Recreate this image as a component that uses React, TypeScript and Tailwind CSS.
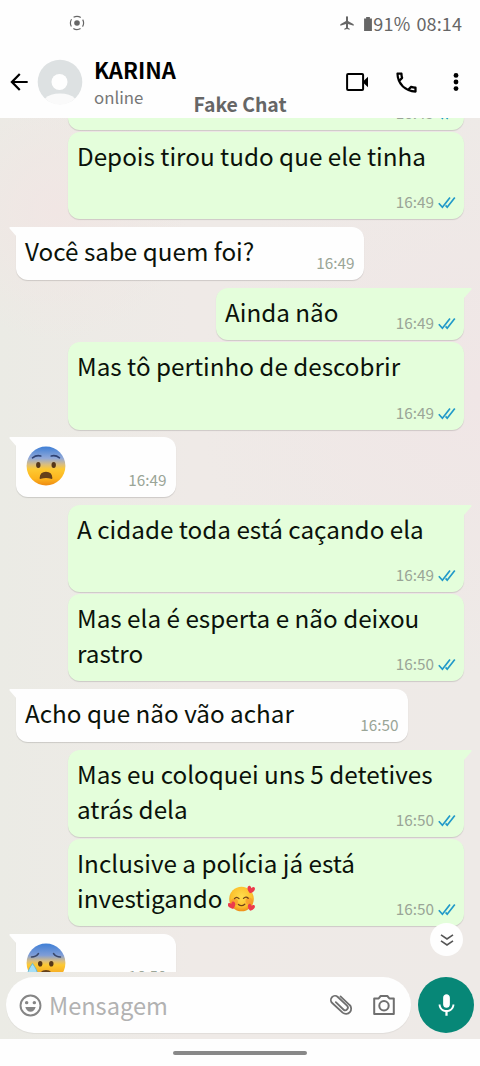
import React from 'react'
import { clsx } from 'clsx'
import { MdAirplanemodeActive, MdArrowBack, MdMic, MdOutlineCall } from 'react-icons/md'

type Message = {
  id: number
  text?: string
  emoji?: React.ReactNode
  time: string
  mine?: boolean
  tail?: boolean
  size: string
}

const FearfulFace = () => (
  <svg viewBox="0 0 40 40" className="h-10 w-10">
    <defs>
      <linearGradient id="fearful" x1="0" y1="0" x2="0" y2="1">
        <stop offset="0" stopColor="#3f7fd6" />
        <stop offset="0.3" stopColor="#92a9d8" />
        <stop offset="0.46" stopColor="#d9bd80" />
        <stop offset="0.58" stopColor="#fdc932" />
        <stop offset="0.82" stopColor="#fdb51e" />
        <stop offset="1" stopColor="#ee8b12" />
      </linearGradient>
    </defs>
    <circle cx="20" cy="20" r="19.4" fill="url(#fearful)" />
    <path d="M6.5 11.8Q10.5 8.6 14.8 10M33.5 11.8Q29.5 8.6 25.2 10" stroke="#2f4272" strokeWidth="1.6" fill="none" strokeLinecap="round" />
    <ellipse cx="12.3" cy="19" rx="2.2" ry="2.9" fill="#553719" />
    <ellipse cx="27.7" cy="19" rx="2.2" ry="2.9" fill="#553719" />
    <path d="M13.6 32Q14 25.8 20 25.8T26.4 32Q26.4 33.2 25 32.8Q20 31 15 32.8Q13.5 33.2 13.6 32Z" fill="#65401a" />
  </svg>
)

const AnxiousFace = () => (
  <svg viewBox="0 0 40 40" className="h-10 w-10">
    <defs>
      <linearGradient id="anxious" x1="0" y1="0" x2="0" y2="1">
        <stop offset="0" stopColor="#3f7fd6" />
        <stop offset="0.3" stopColor="#7f9dd7" />
        <stop offset="0.45" stopColor="#d9bd80" />
        <stop offset="0.55" stopColor="#fdc932" />
        <stop offset="1" stopColor="#ee8b12" />
      </linearGradient>
    </defs>
    <circle cx="20" cy="20" r="19.4" fill="url(#anxious)" />
    <path d="M5.5 14Q10 14 12.5 10.5M34.5 14Q30 14 27.5 10.5" stroke="#394668" strokeWidth="1.5" fill="none" strokeLinecap="round" />
    <ellipse cx="14.2" cy="20.8" rx="2.2" ry="2.8" fill="#553719" />
    <ellipse cx="25.3" cy="20.8" rx="2.2" ry="2.8" fill="#553719" />
    <path d="M14 31Q15 27 20 27T26 31Z" fill="#65401a" />
    <path d="M6.5 20.5Q1.8 27 1.8 31A4.8 4.8 0 0 0 11.4 31Q11.4 27 6.5 20.5Z" fill="#a5def6" stroke="#51b4dc" strokeWidth="0.8" />
  </svg>
)

const heart = 'M0 3.5C-6 0-4-4.8-1.7-3.8Q-.4-3.3 0-2Q.4-3.3 1.7-3.8C4-4.8 6 0 0 3.5Z'

const LoveFace = () => (
  <svg viewBox="0 0 28 28" className="inline-block h-7 w-7 align-[-5px]">
    <defs>
      <radialGradient id="love" cx="0.5" cy="0.4" r="0.6">
        <stop offset="0" stopColor="#ffdd4d" />
        <stop offset="0.7" stopColor="#fcc12e" />
        <stop offset="1" stopColor="#ee8c18" />
      </radialGradient>
    </defs>
    <circle cx="13.5" cy="14" r="12.3" fill="url(#love)" />
    <circle cx="6.5" cy="17" r="3.5" fill="#f58e2c" opacity="0.6" />
    <circle cx="21" cy="16" r="3.5" fill="#f58e2c" opacity="0.6" />
    <path d="M6.5 13.6Q8.5 11 11 13.6M15.5 13.4Q18 10.8 20.2 13.2M10.4 19.4Q13.5 22 16.8 19.2" stroke="#70421a" strokeWidth="1.3" fill="none" strokeLinecap="round" />
    <path d={heart} transform="translate(22.8 5) rotate(15) scale(.95)" fill="#ec3b4c" />
    <path d={heart} transform="translate(4 20.8) rotate(-20) scale(.95)" fill="#ec3b4c" />
    <path d={heart} transform="translate(23 22.8) rotate(15) scale(.9)" fill="#ec3b4c" />
  </svg>
)

const messages: Message[] = [
  { id: 1, time: '16:49', mine: true, size: '-mt-[75px] h-[87px] w-[396px]' },
  { id: 2, text: 'Depois tirou tudo que ele tinha', time: '16:49', mine: true, size: 'mt-0.5 h-[87px] w-[396px]' },
  { id: 3, text: 'Você sabe quem foi?', time: '16:49', tail: true, size: 'mt-2 h-[53px] w-[348px]' },
  { id: 4, text: 'Ainda não', time: '16:49', mine: true, tail: true, size: 'mt-2 h-[52px] w-[248px]' },
  { id: 5, text: 'Mas tô pertinho de descobrir', time: '16:49', mine: true, size: 'mt-0.5 h-[88px] w-[396px]' },
  { id: 6, emoji: <FearfulFace />, time: '16:49', tail: true, size: 'mt-[7px] h-[60px] w-[160px]' },
  { id: 7, text: 'A cidade toda está caçando ela', time: '16:49', mine: true, tail: true, size: 'mt-2 h-[87px] w-[396px]' },
  { id: 8, text: 'Mas ela é esperta e não deixou rastro', time: '16:50', mine: true, size: 'mt-0.5 h-[87px] w-[396px]' },
  { id: 9, text: 'Acho que não vão achar', time: '16:50', tail: true, size: 'mt-2 h-[53px] w-[392px]' },
  { id: 10, text: 'Mas eu coloquei uns 5 detetives atrás dela', time: '16:50', mine: true, tail: true, size: 'mt-2 h-[87px] w-[396px]' },
  {
    id: 11,
    text: 'Inclusive a polícia já está investigando ',
    emoji: <LoveFace />,
    time: '16:50',
    mine: true,
    size: 'mt-0.5 h-[87px] w-[396px]',
  },
  { id: 12, emoji: <AnxiousFace />, time: '16:50', tail: true, size: 'mt-2 h-[59px] w-[160px]' },
]

const Ticks = () => (
  <svg viewBox="0 0 18 13" className="mt-0.5 h-[13px] w-[18px]" fill="none" stroke="#2199c9" strokeWidth="1.7">
    <path d="M.8 7.2L4.4 11.2L12 1.4M7.6 9.4L9.2 11.2L16.8 1.4" />
  </svg>
)

const Bubble = ({ message }: { message: Message }) => {
  const { text, emoji, time, mine, tail, size } = message
  return (
    <div
      className={clsx(
        'relative shrink-0 rounded-xl shadow-[0_1px_1px_rgba(0,0,0,0.14)]',
        size,
        mine ? 'mr-4 self-end bg-[#e4fedb]' : 'ml-4 self-start bg-[#fefefe]',
        tail && (mine ? 'rounded-tr-none' : 'rounded-tl-none')
      )}
    >
      {tail && (
        <svg
          viewBox="0 0 8 10"
          className={clsx('absolute top-0 h-2.5 w-2', mine ? '-right-[7.5px] text-[#e4fedb]' : '-left-[7.5px] -scale-x-100 text-[#fefefe]')}
        >
          <path d="M0 0H6.5Q8.5 0 7 2L0 10Z" fill="currentColor" />
        </svg>
      )}
      {text ? (
        <p className="pt-[7.2px] pr-6 pl-[9px] text-[24.25px] leading-[34.8px] text-[#0b120a]">
          {text}
          {emoji}
        </p>
      ) : (
        <div className="pt-[9px] pl-[9.5px]">{emoji}</div>
      )}
      <div className={clsx('absolute bottom-2 flex items-center gap-1 text-[15.3px] leading-5 text-[#9aa597]', mine ? 'right-2' : 'right-[9.5px]')}>
        <span>{time}</span>
        {mine && <Ticks />}
      </div>
    </div>
  )
}

const StatusBar = () => (
  <div className="flex h-12 items-center justify-between pr-[18px] pl-[69px] text-[#666]">
    <svg viewBox="0 0 16 16" className="-mt-0.5 h-4 w-4" fill="none" stroke="currentColor" strokeWidth="1.2">
      <circle cx="8" cy="8" r="6.6" strokeDasharray="7.6 2.77" strokeDashoffset="3.8" />
      <circle cx="8" cy="8" r="2.8" fill="currentColor" stroke="none" />
    </svg>
    <div className="-mt-[3px] flex items-center text-[18px] leading-6">
      <MdAirplanemodeActive className="mr-2 h-4 w-4" />
      <svg viewBox="0 0 10 15" className="mt-0.5 h-[14px] w-[10px]" fill="currentColor">
        <path d="M3 0H7V1.5H9.2V15H.8V1.5H3Z" />
      </svg>
      <span className="mr-1.5 tracking-[0.2px]">91%</span>
      <span className="tracking-[0.1px]">08:14</span>
    </div>
  </div>
)

const Header = () => (
  <header className="relative z-10 h-[118px] shrink-0 bg-[#fefefe]">
    <StatusBar />
    <div className="flex h-[68px] items-center pl-1.5">
      <MdArrowBack className="h-[26px] w-[26px] text-black" />
      <svg viewBox="0 0 46 46" className="ml-[5px] h-[46px] w-[46px]">
        <circle cx="23" cy="23" r="22.3" fill="#dde1e2" />
        <circle cx="22.5" cy="23" r="8" fill="#fefefe" />
        <path d="M8 39.5Q13 34.5 23 34.5T38 39.5Q32 45.5 23 45.5T8 39.5Z" fill="#fafafa" />
      </svg>
      <div className="ml-[11px] flex w-[100px] flex-col pt-0.5">
        <span className="text-[22px] leading-[27px] font-bold text-black">KARINA</span>
        <span className="text-[16.8px] leading-[28px] text-[#777]">online</span>
      </div>
      <div className="ml-auto flex items-center pr-3">
        <svg viewBox="0 0 24 20" className="mr-6 h-5 w-6 text-black">
          <rect x="2.1" y="2.1" width="16" height="15.8" rx="1" fill="none" stroke="currentColor" strokeWidth="2" />
          <path d="M18.5 9L23 4.8V15.2L18.5 11Z" fill="currentColor" />
        </svg>
        <MdOutlineCall className="mr-[33px] h-[27px] w-[27px] text-black" />
        <svg viewBox="0 0 6 20" className="mr-[9px] h-5 w-1.5 text-black" fill="currentColor">
          <circle cx="3" cy="3.4" r="2.4" />
          <circle cx="3" cy="10" r="2.4" />
          <circle cx="3" cy="16.6" r="2.4" />
        </svg>
      </div>
    </div>
    <span className="absolute top-[92px] left-0 w-full text-center text-[19.4px] leading-6 font-bold text-[#666]">Fake Chat</span>
  </header>
)

const Composer = () => (
  <footer className="flex h-[67px] shrink-0 items-start gap-[7px] pt-[5px] pr-1.5 pl-1.5">
    <div className="flex h-14 w-[406px] items-center rounded-full bg-[#fefefe] pl-[13px] shadow-[0_1px_1px_rgba(0,0,0,0.06)]">
      <svg viewBox="0 0 24 24" className="h-[23px] w-[23px] text-[#858585]" fill="currentColor">
        <circle cx="12" cy="12" r="10.4" fill="none" stroke="currentColor" strokeWidth="2" />
        <circle cx="8" cy="9" r="1.8" />
        <circle cx="16" cy="9" r="1.8" />
        <path d="M6.6 13.6H17.4Q16 18.6 12 18.6T6.6 13.6Z" />
      </svg>
      <span className="ml-[7px] text-[23.6px] leading-9 text-[#b2b2b2]">Mensagem</span>
      <svg viewBox="0 0 24 22" className="ml-auto h-[22px] w-6 text-[#6f6f6f]" fill="none" stroke="currentColor" strokeWidth="1.8" strokeLinecap="round">
        <path d="M11.5 2.4L20.4 10.8A5 5 0 0 1 13.6 18.6L3.2 9A4.1 4.1 0 0 1 8.8 3L18 11.7A2.6 2.6 0 0 1 14.4 15.5L6.8 8.2" />
      </svg>
      <svg viewBox="0 0 24 22" className="mr-[15px] ml-[19px] h-[22px] w-6 text-[#6f6f6f]" fill="none" stroke="currentColor" strokeWidth="2">
        <path d="M2.2 4.4H6.7L8.7 2H15.3L17.3 4.4H21.8V20H2.2Z" strokeLinejoin="round" />
        <circle cx="12" cy="11.8" r="4.7" />
      </svg>
    </div>
    <button className="flex h-14 w-14 shrink-0 items-center justify-center rounded-full bg-[#078777]">
      <MdMic className="h-[27px] w-[27px] text-white" />
    </button>
  </footer>
)

const App = () => (
  <div className="flex h-[1066px] w-[480px] flex-col overflow-hidden bg-[#fefefe] font-['Noto_Sans_CJK_JP',sans-serif]">
    <Header />
    <div className="relative flex h-[921px] flex-col bg-[#edeae6] bg-[radial-gradient(circle_at_12%_10%,#f1e6e4_0%,transparent_14%),radial-gradient(circle_at_100%_30%,#f0e6e6_0%,transparent_35%),linear-gradient(90deg,#ebebe5_0%,#efeae7_40%,#eeeae7_100%)]">
      <main className="flex h-[854px] shrink-0 flex-col overflow-hidden">
        {messages.map(message => (
          <Bubble key={message.id} message={message} />
        ))}
      </main>
      <Composer />
      <button className="absolute right-[17px] bottom-[83px] flex h-[33px] w-[33px] items-center justify-center rounded-full bg-[#fefefe]">
        <svg viewBox="0 0 14 12" className="h-3 w-3.5 text-[#555]" fill="none" stroke="currentColor" strokeWidth="1.6">
          <path d="M1 .8L7 5L13 .8M1 6.8L7 11L13 6.8" />
        </svg>
      </button>
    </div>
    <div className="flex grow items-center justify-center">
      <div className="h-1 w-[134px] rounded-full bg-[#888]" />
    </div>
  </div>
)

export default App
